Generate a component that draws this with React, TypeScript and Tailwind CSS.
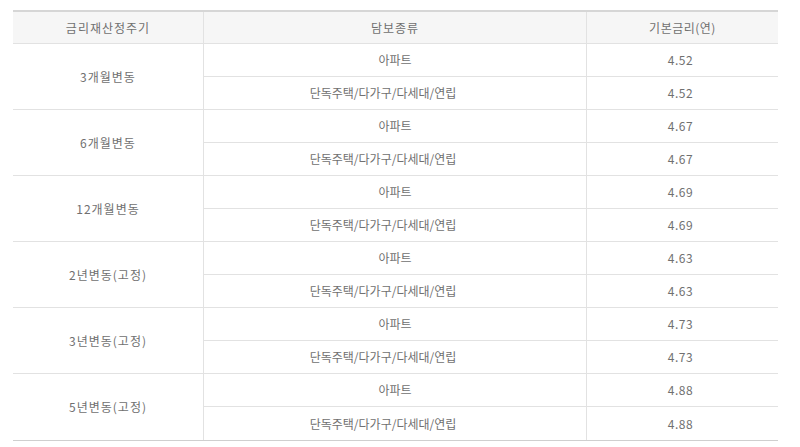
import React from "react";

const groups = [
  { name: "3개월변동", rates: ["4.52", "4.52"] },
  { name: "6개월변동", rates: ["4.67", "4.67"] },
  { name: "12개월변동", rates: ["4.69", "4.69"] },
  { name: "2년변동(고정)", rates: ["4.63", "4.63"] },
  { name: "3년변동(고정)", rates: ["4.73", "4.73"] },
  { name: "5년변동(고정)", rates: ["4.88", "4.88"] },
];

const types = ["아파트", "단독주택/다가구/다세대/연립"];

export default function App() {
  return (
    <div
      className="w-[800px] h-[447px] bg-white pt-[10px] pl-[13px] text-[12px] text-[#707070]"
      style={{ fontFamily: '"Noto Sans CJK KR", "Noto Sans", sans-serif' }}
    >
      <div className="w-[765px] grid grid-cols-[191px_383px_191px] border-t-2 border-[#d6d6d6] border-b border-b-[#cfcfcf]">
        <div className="h-[32px] bg-[#f6f6f6] border-b border-r border-[#e2e2e2] flex items-center justify-center tracking-[1px]">
          금리재산정주기
        </div>
        <div className="h-[32px] bg-[#f6f6f6] border-b border-r border-[#e2e2e2] flex items-center justify-center tracking-[1px]">
          담보종류
        </div>
        <div className="h-[32px] bg-[#f6f6f6] border-b border-[#e2e2e2] flex items-center justify-center tracking-[0.5px]">
          기본금리(연)
        </div>
        {groups.map((g, gi) => (
          <React.Fragment key={g.name}>
            <div
              className={`row-span-2 border-r border-[#e2e2e2] flex items-center justify-center tracking-[1px] ${
                gi < groups.length - 1 ? "border-b" : ""
              }`}
            >
              {g.name}
            </div>
            {types.map((t, ti) => {
              const last = gi === groups.length - 1 && ti === 1;
              return (
                <React.Fragment key={t}>
                  <div
                    className={`h-[33px] border-r border-[#e2e2e2] flex items-center justify-center ${
                      ti === 1 ? "pr-[24px]" : ""
                    } ${last ? "h-[32px]" : "border-b"}`}
                  >
                    {t}
                  </div>
                  <div
                    className={`h-[33px] border-[#e2e2e2] flex items-center justify-center pr-[4px] tracking-[0.5px] ${
                      last ? "h-[32px]" : "border-b"
                    }`}
                  >
                    {g.rates[ti]}
                  </div>
                </React.Fragment>
              );
            })}
          </React.Fragment>
        ))}
      </div>
    </div>
  );
}
